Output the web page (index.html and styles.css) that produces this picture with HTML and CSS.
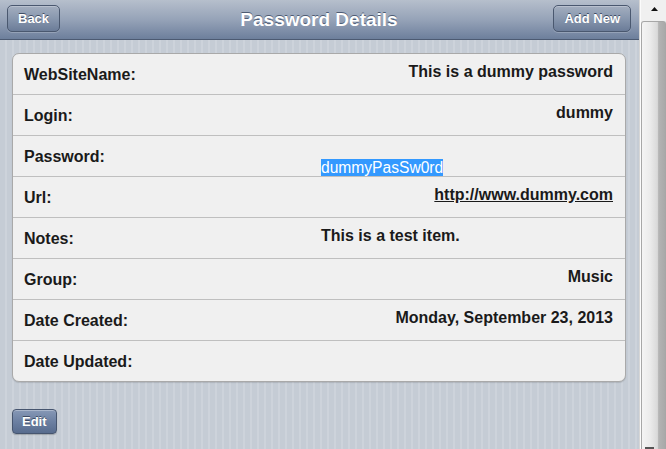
FILE: index.html
```html
<!DOCTYPE html>
<html>
<head>
<meta charset="utf-8">
<title>Password Details</title>
<link rel="stylesheet" href="styles.css">
</head>
<body>
<div class="app">
  <div class="page">
    <header class="bar">
      <a class="btn btn-left">Back</a>
      <h1 class="title">Password Details</h1>
      <a class="btn btn-right">Add New</a>
    </header>
    <main class="content">
      <div class="card">
        <div class="row"><div class="label">WebSiteName:</div><div class="value">This is a dummy password</div></div>
        <div class="row"><div class="label">Login:</div><div class="value">dummy</div></div>
        <div class="row"><div class="label">Password:</div><div class="value value-pass"><span class="selected">dummyPasSw0rd</span></div></div>
        <div class="row"><div class="label">Url:</div><div class="value"><a class="link">http://www.dummy.com</a></div></div>
        <div class="row"><div class="label">Notes:</div><div class="value value-left">This is a test item.</div></div>
        <div class="row"><div class="label">Group:</div><div class="value">Music</div></div>
        <div class="row"><div class="label">Date Created:</div><div class="value">Monday, September 23, 2013</div></div>
        <div class="row"><div class="label">Date Updated:</div><div class="value"></div></div>
      </div>
      <div class="actions">
        <a class="btn btn-edit">Edit</a>
      </div>
    </main>
  </div>
  <div class="scrollbar">
    <div class="sb-arrow">
      <svg width="7" height="4" viewBox="0 0 7 4"><polygon points="0,4 7,4 3.5,0" fill="#111"/></svg>
    </div>
    <div class="sb-thumb"><div class="sb-grip"></div></div>
  </div>
</div>
</body>
</html>
```

FILE: styles.css
```css
* { box-sizing: border-box; }
html, body {
  margin: 0;
  padding: 0;
  height: 449px;
  overflow: hidden;
  font-family: "Liberation Sans", Arial, sans-serif;
}
.app {
  display: flex;
  height: 449px;
}
.page {
  width: 639px;
  height: 449px;
  background: repeating-linear-gradient(90deg, #c5ccd5 0 5px, #cdd3db 5px 7px);
}
.bar {
  height: 40px;
  display: grid;
  grid-template-columns: 1fr auto 1fr;
  align-items: start;
  padding: 5px 8px 0 7px;
  background: linear-gradient(#b6bfcc, #96a3b8 50%, #6d7f9c);
  border-bottom: 1px solid #4c5a72;
}
.title {
  margin: -5px 0 0 0;
  font-size: 19px;
  line-height: 39px;
  font-weight: bold;
  color: #fff;
  text-shadow: 0 -1px 0 #4d5b73;
  white-space: nowrap;
}
.btn {
  display: inline-block;
  height: 27px;
  line-height: 25px;
  padding: 0 10px;
  font-size: 13px;
  font-weight: bold;
  color: #fff;
  text-shadow: 0 -1px 0 #3f4c63;
  border: 1px solid #4a586f;
  border-radius: 5px;
  background: linear-gradient(#a3aebf, #8897ae 50%, #6b7c98);
  box-shadow: inset 0 1px 0 rgba(255,255,255,0.25), 0 1px 0 rgba(255,255,255,0.2);
  white-space: nowrap;
}
.btn-left { justify-self: start; }
.btn-right { justify-self: end; }
.content {
  padding: 13px 13px 0 12px;
}
.card {
  background: #f0f0f0;
  border: 1px solid #a9a9a9;
  border-radius: 7px;
  box-shadow: 0 1px 1px rgba(0,0,0,0.12);
}
.row {
  display: grid;
  grid-template-columns: 50% 50%;
  height: 41px;
  border-bottom: 1px solid #bfbfbf;
  color: #1a1a1a;
  font-size: 16px;
  font-weight: bold;
  line-height: 18px;
}
.row:last-child {
  height: 40px;
  border-bottom: 0;
}
.label {
  padding: 12px 0 0 11px;
  white-space: nowrap;
}
.value {
  padding: 9px 12px 0 2px;
  text-align: right;
  white-space: nowrap;
}
.value-left { text-align: left; }
.value-pass {
  text-align: left;
  padding-top: 23px;
  font-weight: normal;
  font-size: 15.6px;
  line-height: 17px;
}
.selected {
  background: #3399ff;
  color: #fff;
}
.link {
  color: #1a1a1a;
  text-decoration: underline;
}
.actions {
  padding-top: 27px;
}
.btn-edit {
  height: 25px;
  line-height: 23px;
  padding: 0 9px;
  border-radius: 4px;
  border-color: #46556f;
  background: linear-gradient(#8698b6, #6c80a2 50%, #586c8e);
  box-shadow: inset 0 1px 0 rgba(255,255,255,0.3), 0 1px 1px rgba(0,0,0,0.2);
}
.scrollbar {
  width: 27px;
  height: 449px;
  display: flex;
  flex-direction: column;
  background: linear-gradient(90deg, #d6d6d6 0 1px, #fbfbfb 1px 2px, #f0f0f0 2px);
}
.sb-arrow {
  height: 21px;
  display: flex;
  justify-content: center;
  padding: 7px 0 0 4px;
}
.sb-arrow svg { display: block; }
.sb-thumb {
  margin-left: 2px;
  height: 428px;
  border: 1px solid #a7a7a7;
  border-bottom: 0;
  border-radius: 3px 3px 0 0;
  background: linear-gradient(90deg, #f4f4f4 0, #ebebeb 35%, #dadada 65%, #d2d2d2 70%, #b4b4b4 72%, #a9a9a9 100%);
  display: flex;
  align-items: flex-end;
  justify-content: flex-start;
  padding-left: 3px;
}
.sb-grip {
  width: 9px;
  height: 2px;
  background: #555;
}
```
